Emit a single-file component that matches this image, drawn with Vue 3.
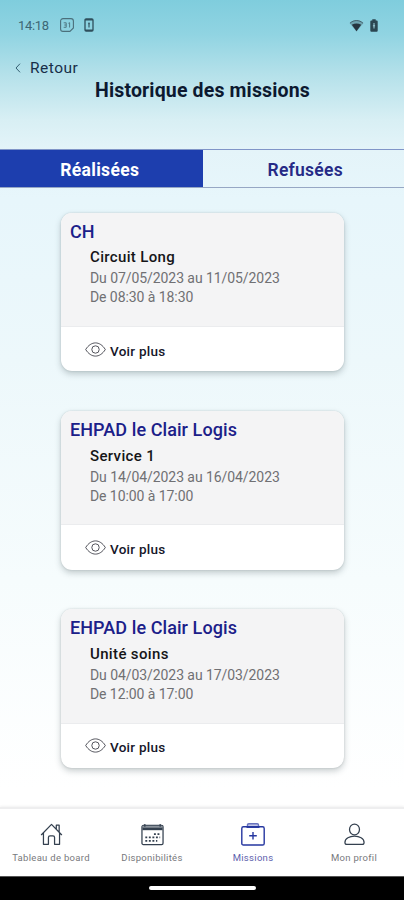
<script setup>
const missions = [
  { place: 'CH', service: 'Circuit Long', dates: 'Du 07/05/2023 au 11/05/2023', hours: 'De 08:30 à 18:30' },
  { place: 'EHPAD le Clair Logis', service: 'Service 1', dates: 'Du 14/04/2023 au 16/04/2023', hours: 'De 10:00 à 17:00' },
  { place: 'EHPAD le Clair Logis', service: 'Unité soins', dates: 'Du 04/03/2023 au 17/03/2023', hours: 'De 12:00 à 17:00' },
]
</script>

<template>
  <div class="screen">
    <div class="status">
      <span class="time">14:18</span>
      <svg class="cal31" width="14" height="14" viewBox="0 0 14 14" fill="none" stroke="#4b6f7b">
        <path d="M3 .6h8a2.4 2.4 0 0 1 2.4 2.4v6.9l-3.5 3.5H3A2.4 2.4 0 0 1 .6 11V3A2.4 2.4 0 0 1 3 .6Z" stroke-width="1.1" />
        <path d="M3.7 4.8h2.5v4.5H3.7M4.3 7h1.9M8.4 5.3l1.2-.6v4.8" stroke-width=".9" />
      </svg>
      <svg class="phone" width="10" height="14" viewBox="0 0 10 14" fill="none" stroke="#2f4f5c">
        <rect x="1" y=".8" width="8" height="12.4" rx="1.1" stroke-width="1.3" />
        <path d="M1 1.7h8M1 12.3h8" stroke-width="1.6" />
        <path d="M5 4.6v4.8M4.200 5.600h1.600" stroke-width="1.100" />
      </svg>
      <svg class="wifi" width="15" height="13" viewBox="0 0 15 13">
        <path d="M.5 4C4.7-.1 10.300-.1 14.500 4L7.500 12.500Z" fill="#527580" fill-opacity=".5" />
        <path d="M1 4.200C5 .700 10 .700 14 4.200" fill="none" stroke="#39525d" stroke-width=".8" />
        <path d="M2.800 5.700q4.700-2.500 9.400 0L7.500 12.200Z" fill="#26343e" />
      </svg>
      <svg class="battery" width="8" height="13" viewBox="0 0 8 13">
        <path d="M2.300.3h3.400v1.200h1Q7.700 1.500 7.700 2.500v9Q7.700 12.700 6.700 12.700H1.300Q.3 12.700.3 11.500v-9Q.3 1.500 1.300 1.500h1Z" fill="#2b4651" />
        <path d="M4 4v5.500M2.900 6.800h2.200" stroke="#9dcdda" stroke-width="1" />
      </svg>
    </div>
    <header>
      <div class="back">
        <svg width="6" height="10" viewBox="0 0 6 10" fill="none" stroke="#365f72"><path d="M5 .7 1 5l4 4.300" /></svg>
        <span>Retour</span>
      </div>
      <h1>Historique des missions</h1>
    </header>
    <div class="tabs">
      <div class="tab active"><span>Réalisées</span></div>
      <div class="tab"><span>Refusées</span></div>
    </div>
    <main>
      <article v-for="m in missions" :key="m.dates" class="card">
        <div class="info">
          <h2>{{ m.place }}</h2>
          <h3>{{ m.service }}</h3>
          <p>{{ m.dates }}</p>
          <p class="hours">{{ m.hours }}</p>
        </div>
        <div class="more">
          <svg width="21" height="15" viewBox="0 0 21 15" fill="none" stroke="#41424b" stroke-width=".9">
            <path d="M.7 7.500C6-1.300 15-1.300 20.300 7.500 15 16.300 6 16.300.7 7.500Z" />
            <circle cx="10.500" cy="7.500" r="3.700" />
          </svg>
          <span>Voir plus</span>
        </div>
      </article>
    </main>
    <nav>
      <div class="item">
        <svg width="23" height="23" viewBox="0 0 24 24" fill="none" stroke="#34404f" stroke-width="1.300" stroke-linejoin="round" stroke-linecap="round">
          <path d="M1.500 12.200 12 1.500l10.500 10.700M3.600 10.500v11.700h5.200v-7q0-1.700 1.700-1.700h3q1.700 0 1.700 1.700v7h5.200V10.500M17 6.300V2.300h3v7" />
        </svg>
        <span>Tableau de board</span>
      </div>
      <div class="item">
        <svg width="23" height="23" viewBox="0 0 24 24" fill="none" stroke="#34404f" stroke-width="1.300">
          <rect x="1" y="2.500" width="22" height="20" rx="1.500" />
          <path d="M1.500 6h21" stroke-width="3" />
          <path d="M1.800 3.500h20.400" stroke="#8b939d" />
          <path d="M4 1v3M20 1v3" />
          <path d="M13.500 11.500h6.500M4.500 15H20M4.500 18.700H17" stroke-width="1.800" stroke-dasharray="2 1.700" />
        </svg>
        <span>Disponibilités</span>
      </div>
      <div class="item selected">
        <svg width="24" height="23" viewBox="0 0 24 23" fill="none" stroke="#2637a0" stroke-width="1.400">
          <path d="M6.500 3.500V2Q6.500.8 7.800.8h8.400q1.300 0 1.300 1.200v1.500" stroke="#6873bd" fill="#c5c9e8" />
          <rect x=".8" y="3.800" width="22.400" height="18.200" rx="1.600" />
          <path d="M5.500 4h13" stroke-width="1.900" />
          <path d="M12 9v7.500M8.200 12.800h7.600" />
        </svg>
        <span>Missions</span>
      </div>
      <div class="item">
        <svg width="23" height="23" viewBox="0 0 24 24" fill="none" stroke="#34404f" stroke-width="1.300">
          <ellipse cx="12" cy="6.800" rx="5.200" ry="5.700" />
          <path d="M2 20.400C2 11.500 22 11.500 22 20.400q0 2-2 2H4q-2 0-2-2Z" />
        </svg>
        <span>Mon profil</span>
      </div>
    </nav>
    <div class="system"><div class="handle"></div></div>
  </div>
</template>

<style>
body { margin: 0; }
</style>

<style scoped>
* { box-sizing: border-box; }
.screen {
  width: 404px; height: 900px; overflow: hidden;
  display: flex; flex-direction: column;
  font-family: Roboto, "Liberation Sans", sans-serif;
  background: linear-gradient(180deg, #7fcddd 0, #91d4e2 35px, #b5e1ea 75px, #d8eff4 120px, #e4f4f9 150px, #e7f6fb 200px, #edf8fb 360px, #f6fcfd 580px, #fff 790px);
}
.status { height: 50px; display: flex; align-items: center; padding: 0 26px 0 18px; color: #3d6775; flex: none; }
.time { font-size: 13px; letter-spacing: -.3px; width: 42px; white-space: nowrap; }
.phone { margin-left: 10px; }
.wifi { margin-left: auto; }
.battery { margin-left: 6px; }
header { height: 99px; flex: none; }
.back { height: 36px; padding-left: 15px; display: flex; align-items: center; gap: 9px; font-size: 15.500px; color: #172e48; letter-spacing: .5px; }
h1 { margin: -7px 0 0; padding-left: 1px; font-size: 19.500px; letter-spacing: .15px; line-height: 24px; font-weight: 700; text-align: center; color: #0c1930; white-space: nowrap; }
.tabs { display: flex; height: 39px; flex: none; border-top: 1px solid #8095c8; border-bottom: 1px solid #96a7c4; }
.tab { width: 50%; display: flex; align-items: center; justify-content: center; font-size: 17.500px; letter-spacing: .25px; font-weight: 600; color: #252a86; padding-top: 3px; padding-left: 4px; }
.tab.active { width: 203px; background: #1d3eae; color: #fff; font-weight: 700; padding-left: 0; padding-right: 3px; letter-spacing: .3px; }
main { padding: 24.500px 60px 0 61px; display: flex; flex-direction: column; gap: 39.500px; height: 619px; flex: none; }
.card { height: 158.800px; flex: none; border-radius: 11px; overflow: hidden; background: #fff; box-shadow: 0 3px 6px rgba(40, 60, 65, .25), 0 0 2px rgba(40, 60, 65, .2); }
.info { height: 114.500px; background: #f4f4f5; border-bottom: 1px solid #ebecee; padding: 8.200px 9px 0; }
h2 { margin: 0; font-size: 18px; letter-spacing: .08px; line-height: 22px; font-weight: 500; color: #1b2089; white-space: nowrap; }
h3 { margin: 4.700px 0 0 20px; font-size: 15px; letter-spacing: .35px; line-height: 20px; font-weight: 500; color: #151518; white-space: nowrap; }
p { margin: 2px 0 0 20px; font-size: 14px; letter-spacing: -.07px; line-height: 18px; font-weight: 400; color: #707073; white-space: nowrap; }
p.hours { margin-top: 1px; }
.more { display: flex; align-items: center; height: 44px; padding-left: 24px; gap: 4px; font-size: 13.500px; letter-spacing: .25px; font-weight: 500; color: #16162a; }
.more span { padding-top: 3.500px; }
nav { height: 69px; flex: none; display: flex; background: #fff; border-top: 2px solid #eeeeef; box-shadow: 0 -1px 2px #f2f2f2; }
.item { width: 25%; padding: 13.500px 0 0 1px; display: flex; flex-direction: column; align-items: center; font-size: 9.500px; letter-spacing: .3px; line-height: 12px; color: #78797d; }
.item span { margin-top: 6.500px; white-space: nowrap; }
.selected { color: #5d61ad; }
.system { flex: 1; background: #000; border-top: 1px solid #555; display: flex; justify-content: center; padding-top: 9px; }
.handle { width: 107px; height: 4px; border-radius: 2px; background: #fff; }
</style>
